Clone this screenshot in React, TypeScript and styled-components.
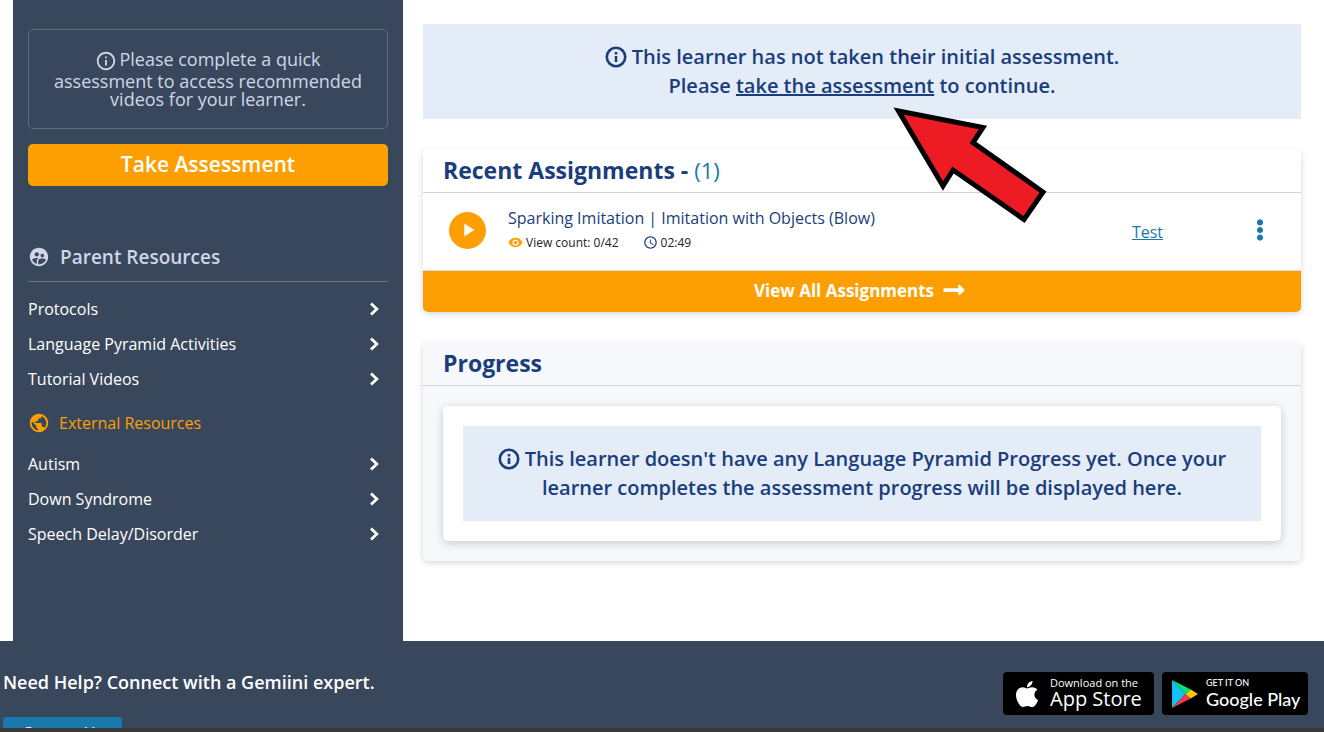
import React from "react";
import styled, { createGlobalStyle } from "styled-components";
import {
  MdInfoOutline,
  MdSupervisedUserCircle,
  MdPublic,
  MdRemoveRedEye,
  MdAccessTime,
  MdPlayArrow,
} from "react-icons/md";
import { FaEllipsisV, FaLongArrowAltRight, FaApple } from "react-icons/fa";

const color = {
  slate: "#39475c",
  navy: "#1a3d7c",
  orange: "#fd9f02",
  teal: "#1a79ab",
  pale: "#e4ecf7",
  mist: "#ced6e8",
};

const GlobalStyle = createGlobalStyle`
  *, *::before, *::after { box-sizing: border-box; }
  body {
    margin: 0;
    background: #fff;
    font-family: "Open Sans", sans-serif;
    font-size: 16px;
  }
  h2, h3, p, ul { margin: 0; padding: 0; }
  button { font-family: inherit; border: 0; cursor: pointer; }
`;

const Screen = styled.div`
  display: flex;
  flex-direction: column;
  height: 100vh;
  overflow: hidden;
`;

const Scroller = styled.div`
  flex: 1;
  min-height: 0;
  overflow: hidden;
`;

const BottomEdge = styled.div`
  flex: none;
  height: 4px;
  background: #393939;
`;

const Columns = styled.div`
  display: flex;
  padding-left: 13px;
`;

const Sidebar = styled.aside`
  flex: none;
  width: 390px;
  padding: 29px 15px 90px;
  background: ${color.slate};
`;

const Prompt = styled.p`
  padding: 20px;
  border: 1px solid #5f6a7b;
  border-radius: 5px;
  color: ${color.mist};
  font-size: 18px;
  line-height: 18px;
  text-align: center;

  svg {
    width: 22px;
    height: 22px;
    margin-right: 2px;
    vertical-align: middle;
  }
`;

const TakeButton = styled.button`
  display: block;
  width: 100%;
  height: 42px;
  margin-top: 15px;
  padding: 0 0 2px;
  border-radius: 5px;
  background: ${color.orange};
  color: #fff;
  font-size: 21px;
  font-weight: 600;
  line-height: 28px;
`;

const GroupTitle = styled.h3<{ $accent?: boolean }>`
  display: flex;
  align-items: center;
  gap: ${(p) => (p.$accent ? 9 : 10)}px;
  height: ${(p) => (p.$accent ? 28 : 50)}px;
  margin-top: ${(p) => (p.$accent ? 13 : 46)}px;
  border-bottom: ${(p) => (p.$accent ? "0" : "1px solid #6f7779")};
  color: ${(p) => (p.$accent ? color.orange : color.mist)};
  font-size: ${(p) => (p.$accent ? 16 : 19)}px;
  font-weight: ${(p) => (p.$accent ? 400 : 600)};

  svg {
    width: 22px;
    height: 22px;
  }
`;

const LinkList = styled.ul`
  padding-top: 9px;
  list-style: none;
`;

const LinkRow = styled.a`
  display: flex;
  align-items: center;
  justify-content: space-between;
  height: 35px;
  padding-right: 8px;
  color: #fff;
  font-size: 16px;
  text-decoration: none;
`;

const Main = styled.main`
  flex: 1;
  min-width: 0;
  padding: 24px 23px 20px 20px;
`;

const Notice = styled.div`
  position: relative;
  padding: 18px 20px 19px;
  background: ${color.pale};
  color: ${color.navy};
  font-size: 20px;
  font-weight: 600;
  line-height: 29px;
  text-align: center;

  a { color: inherit; text-decoration-thickness: 2px; }
  p > svg {
    width: 22px;
    height: 22px;
    margin-right: 5px;
    vertical-align: -4px;
  }
`;

const Pointer = styled.svg`
  position: absolute;
  z-index: 2;
  top: 80px;
  left: calc(50% + 28px);
  width: 160px;
  height: 124px;
  pointer-events: none;
`;

const Card = styled.section<{ $tinted?: boolean }>`
  margin-top: 30px;
  border-radius: 5px;
  background: ${(p) => (p.$tinted ? "#f7f8fc" : "#fff")};
  box-shadow: 0 2px 6px rgba(0, 0, 0, 0.16);
`;

const CardTitle = styled.h2`
  height: 44px;
  padding: 0 20px;
  border-bottom: 1px solid #cdd2e5;
  color: ${color.navy};
  font-size: 23px;
  font-weight: 700;
  line-height: 43px;

  span { color: ${color.teal}; font-size: 22px; font-weight: 400; }
`;

const Assignment = styled.div`
  display: flex;
  align-items: center;
  height: 78px;
  padding: 0 30px 3px 26px;
  border-bottom: 1px solid #d5d8e0;
`;

const PlayButton = styled.button`
  display: flex;
  align-items: center;
  justify-content: center;
  width: 37px;
  height: 37px;
  padding: 0;
  border-radius: 50%;
  background: ${color.orange};
  color: #fff;
`;

const Details = styled.div`
  flex: 1;
  margin-left: 22px;
  color: ${color.navy};
  line-height: 24px;
`;

const Meta = styled.div`
  display: flex;
  gap: 24px;
  margin-top: 1px;
  color: #222;
  font-size: 12px;

  span { display: flex; align-items: center; gap: 3px; }
`;

const TestLink = styled.a`
  margin-right: 86px;
  padding-top: 3px;
  color: ${color.teal};
`;

const MenuButton = styled.button`
  display: flex;
  padding: 0;
  background: none;
  color: ${color.teal};
`;

const ViewAll = styled.button`
  display: flex;
  align-items: center;
  justify-content: center;
  gap: 8px;
  width: 100%;
  height: 41px;
  padding: 0 4px 3px 0;
  border-radius: 0 0 5px 5px;
  background: ${color.orange};
  color: #fff;
  font-size: 17px;
  font-weight: 700;
`;

const CardBody = styled.div`
  padding: 20px;
`;

const Inset = styled.div`
  padding: 20px;
  border-radius: 5px;
  background: #fff;
  box-shadow: 0 2px 8px rgba(0, 0, 0, 0.2);
`;

const Footer = styled.footer`
  display: flex;
  justify-content: space-between;
  align-items: flex-start;
  padding: 30px 16px 30px 3px;
  background: ${color.slate};
  color: #fff;
`;

const HelpText = styled.p`
  font-size: 18px;
  font-weight: 600;
  line-height: 22px;
`;

const ContactButton = styled.button`
  width: 119px;
  height: 32px;
  margin-top: 24px;
  padding: 0;
  border-radius: 3px;
  background: ${color.teal};
  color: #fff;
  font-size: 16px;
  line-height: 24px;
`;

const Stores = styled.div`
  display: flex;
  gap: 8px;
  padding-top: 1px;
`;

const StoreBadge = styled.a<{ $width: number; $font: string }>`
  display: flex;
  align-items: center;
  gap: 8px;
  width: ${(p) => p.$width}px;
  height: 43px;
  padding-left: 9px;
  border-radius: 4px;
  background: #000;
  color: #fff;
  font-family: ${(p) => p.$font}, sans-serif;
  text-decoration: none;
  white-space: nowrap;
`;

const StoreText = styled.span<{ $small: number; $large: number }>`
  display: flex;
  flex-direction: column;
  padding-bottom: 2px;
  font-size: ${(p) => p.$large}px;
  font-weight: 500;
  line-height: 20px;

  small {
    font-size: ${(p) => p.$small}px;
    line-height: 12px;
  }
`;

const InfoBadge = () => (
  <svg viewBox="0 0 22 22" fill="none" stroke="currentColor" aria-hidden="true">
    <circle cx="11" cy="11" r="9.2" strokeWidth="2.6" />
    <path d="M11 10v6M11 6v2.400" strokeWidth="2.600" />
  </svg>
);

const Chevron = () => (
  <svg width="11" height="16" viewBox="0 0 11 16" aria-hidden="true">
    <path d="M2 2.5 7.8 8 2 13.5" fill="none" stroke="#fff" strokeWidth="2.8" />
  </svg>
);

const PlayLogo = () => (
  <svg width="27" height="30" viewBox="0 0 26 30" preserveAspectRatio="none" aria-hidden="true">
    <path d="M1 1v28l13-14z" fill="#12c4f5" />
    <path d="M1 1 19 10.5 14 15z" fill="#0be377" />
    <path d="M1 29 19 19.5 14 15z" fill="#f43a4c" />
    <path d="M19 10.5 26 15 19 19.5 14 15z" fill="#fdc908" />
  </svg>
);

const Links = ({ items }: { items: string[] }) => (
  <LinkList>
    {items.map((item) => (
      <li key={item}>
        <LinkRow href="#">
          {item}
          <Chevron />
        </LinkRow>
      </li>
    ))}
  </LinkList>
);

export default function App() {
  return (
    <Screen>
      <GlobalStyle />
      <Scroller>
        <Columns>
          <Sidebar>
            <Prompt>
              <MdInfoOutline />
              Please complete a quick assessment to access recommended videos for your learner.
            </Prompt>
            <TakeButton>Take Assessment</TakeButton>
            <GroupTitle>
              <MdSupervisedUserCircle />
              Parent Resources
            </GroupTitle>
            <Links items={["Protocols", "Language Pyramid Activities", "Tutorial Videos"]} />
            <GroupTitle $accent>
              <MdPublic />
              External Resources
            </GroupTitle>
            <Links items={["Autism", "Down Syndrome", "Speech Delay/Disorder"]} />
          </Sidebar>
          <Main>
            <Notice>
              <p>
                <InfoBadge />
                This learner has not taken their initial assessment.
                <br />
                Please <a href="#">take the assessment</a> to continue.
              </p>
              <Pointer viewBox="890 104 160 124" aria-hidden="true">
                <polygon
                  points="898.5,111 983,127.5 973,142.5 1043,192 1024,219.5 953,170 943,186"
                  fill="#ed1c24"
                  stroke="#000"
                  strokeWidth="5"
                  strokeMiterlimit="10"
                />
              </Pointer>
            </Notice>
            <Card>
              <CardTitle>
                Recent Assignments - <span>(1)</span>
              </CardTitle>
              <Assignment>
                <PlayButton aria-label="Play">
                  <MdPlayArrow size={22} />
                </PlayButton>
                <Details>
                  <p>Sparking Imitation | Imitation with Objects (Blow)</p>
                  <Meta>
                    <span>
                      <MdRemoveRedEye size={15} color={color.orange} />
                      View count: 0/42
                    </span>
                    <span>
                      <MdAccessTime size={15} color={color.navy} />
                      02:49
                    </span>
                  </Meta>
                </Details>
                <TestLink href="#">Test</TestLink>
                <MenuButton aria-label="Options">
                  <FaEllipsisV size={22} />
                </MenuButton>
              </Assignment>
              <ViewAll>
                View All Assignments
                <FaLongArrowAltRight size={24} />
              </ViewAll>
            </Card>
            <Card $tinted>
              <CardTitle>Progress</CardTitle>
              <CardBody>
                <Inset>
                  <Notice>
                    <p>
                      <InfoBadge />
                      This learner doesn't have any Language Pyramid Progress yet. Once your
                      learner completes the assessment progress will be displayed here.
                    </p>
                  </Notice>
                </Inset>
              </CardBody>
            </Card>
          </Main>
        </Columns>
        <Footer>
          <div>
            <HelpText>Need Help? Connect with a Gemiini expert.</HelpText>
            <ContactButton>Contact Us</ContactButton>
          </div>
          <Stores>
            <StoreBadge href="#" $width={151} $font='"Open Sans"'>
              <FaApple size={30} />
              <StoreText $small={11} $large={20}>
                <small>Download on the</small>
                App Store
              </StoreText>
            </StoreBadge>
            <StoreBadge href="#" $width={146} $font="Lato">
              <PlayLogo />
              <StoreText $small={9} $large={18}>
                <small>GET IT ON</small>
                Google Play
              </StoreText>
            </StoreBadge>
          </Stores>
        </Footer>
      </Scroller>
      <BottomEdge />
    </Screen>
  );
}
